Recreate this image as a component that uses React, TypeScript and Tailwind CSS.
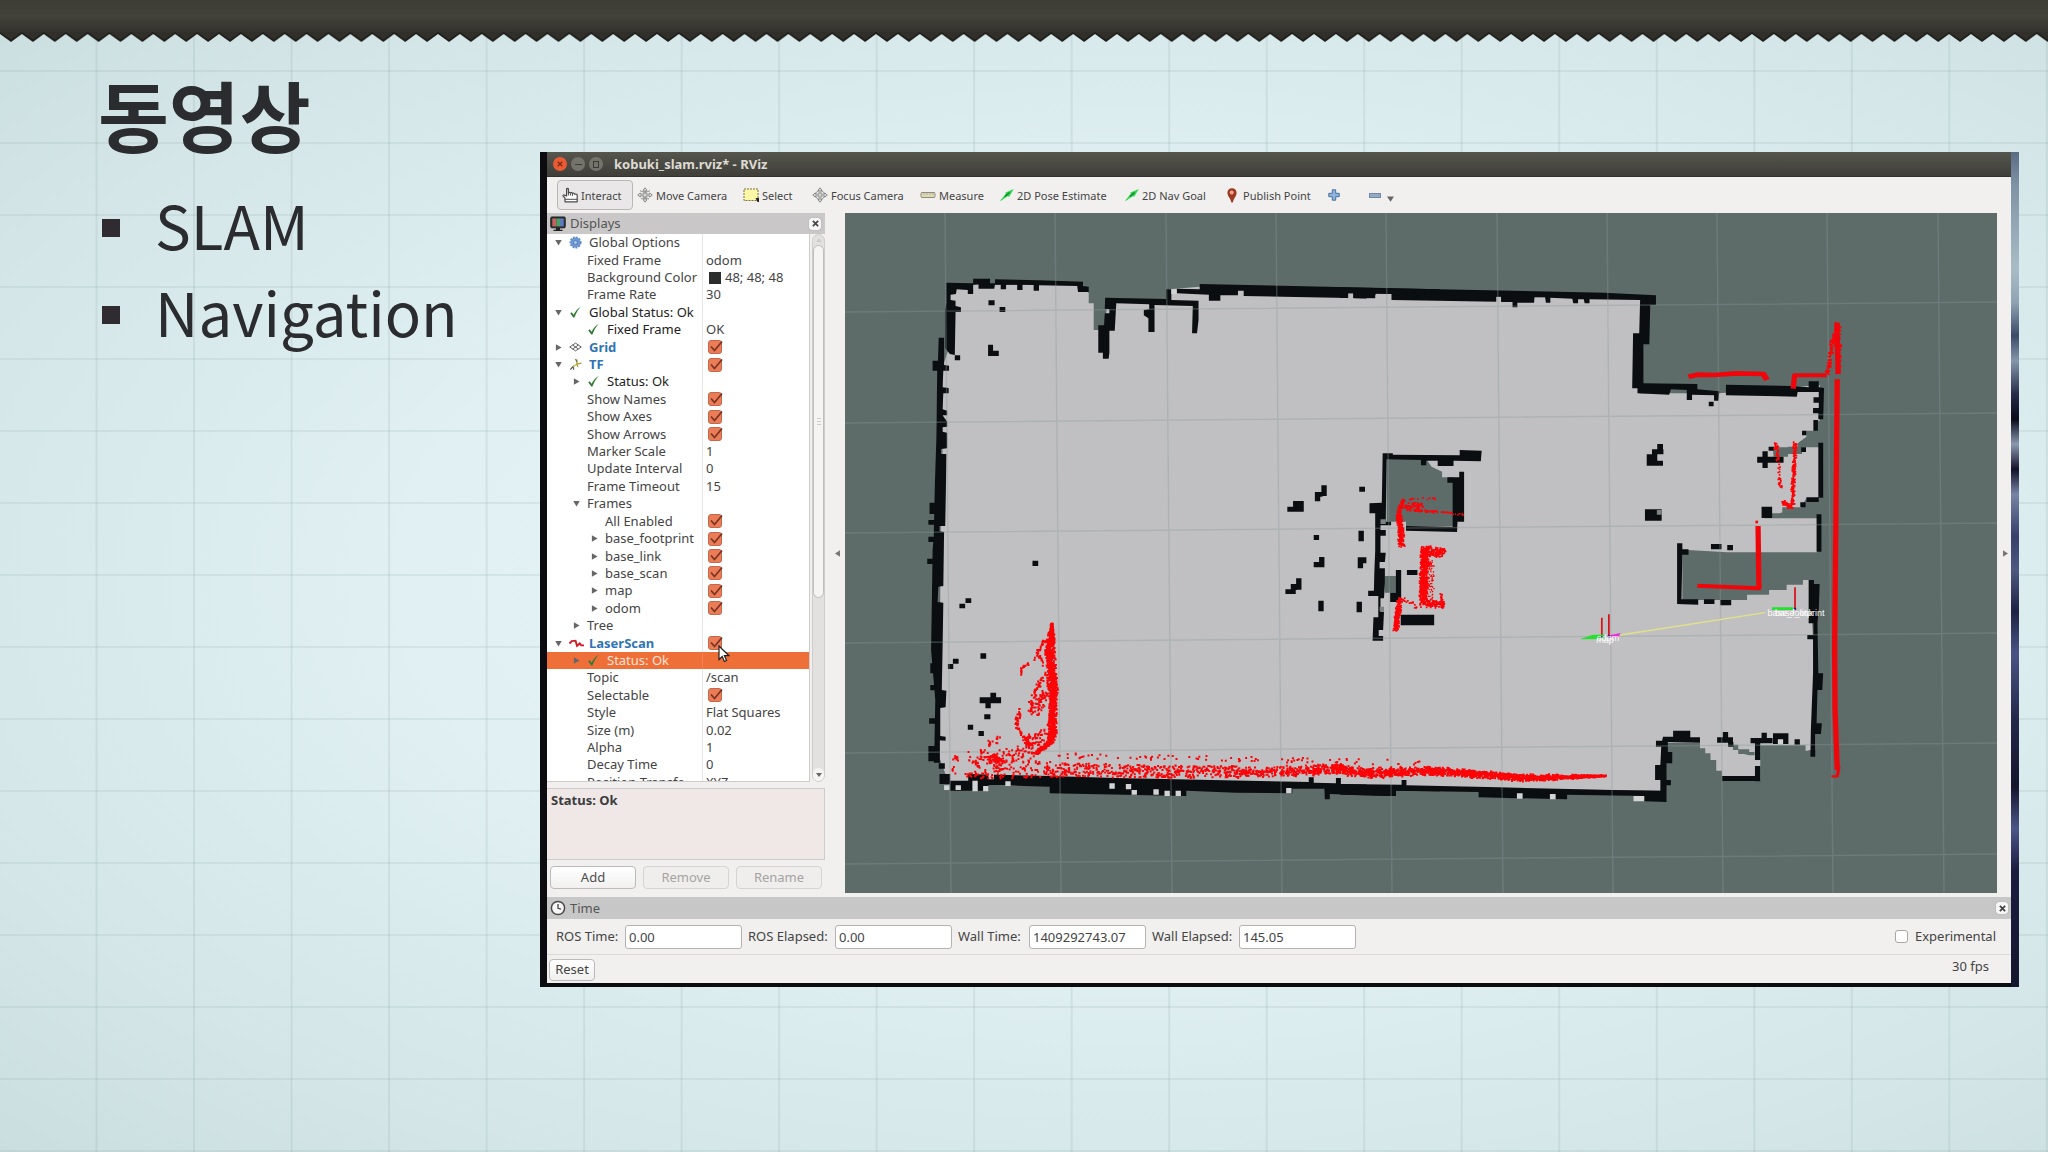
import React from "react";

/* ---------- small icons ---------- */

const HandIcon = () => (
  <svg viewBox="0 0 16 16" className="h-4 w-4 shrink-0" fill="#fff" stroke="#4a4a4a" strokeWidth="1.2" strokeLinejoin="round">
    <path d="M4.6 9V2.2c0-1 1.8-1 1.8 0V6c.2-.9 1.9-.9 2 .1.3-.7 2-.6 2 .4.3-.6 2-.5 2 .6H14c.8 0 1.2.5 1.200 1.200V14.800H3V11L1.200 9.200c-.6-.8.5-1.800 1.300-1.100z" />
    <path d="M3 12.300h12M6.400 6v2.500M8.400 6.500v2M10.400 7v2" strokeWidth="1" />
  </svg>
);

const MoveIcon = ({ ring = false }: { ring?: boolean }) => (
  <svg viewBox="0 0 16 16" className="h-4 w-4 shrink-0" fill="#e4e4e2" stroke="#808080" strokeWidth="0.9" strokeLinejoin="round">
    {ring && <circle cx="8" cy="8" r="4.600" fill="none" />}
    <path d="M8 .8l2 2.500H8.900v3.800h3.800V6L15.300 8l-2.600 2V8.900H8.900v3.800H10L8 15.200l-2-2.500h1.100V8.900H3.300V10L.7 8l2.600-2v1.100h3.800V3.300H6z" />
    {!ring && <path d="M3 3.500c2.500 2 7.500 2 10 0M4 12c2-1.500 6-1.500 8 0" fill="none" />}
  </svg>
);

const SelectIcon = () => (
  <svg viewBox="0 0 16 14" className="h-[14px] w-4 shrink-0">
    <rect x="1" y="1" width="14" height="11.500" fill="#fbf7a6" stroke="#77733c" strokeDasharray="2 1" />
    <path d="M12.500 10h3.500v4h-1.500z" fill="#222" />
  </svg>
);

const RulerIcon = () => (
  <svg viewBox="0 0 16 8" className="h-2 w-4 shrink-0">
    <rect x="1" y="1.500" width="14" height="5" rx="1" fill="#dedbb4" stroke="#8d8c80" />
    <path d="M4 2v2M7 2v2M10 2v2M13 2v2" stroke="#a5a38b" strokeWidth=".7" />
  </svg>
);

const ArrowIcon = () => (
  <svg viewBox="0 0 14 12" className="h-3 w-[14px] shrink-0">
    <path d="M0 11.800L6 4.500l-1-.8L13.800 0 9 8l-1-1L1 11.800z" fill="#2fd64c" />
    <path d="M5 7.500L9.500 3.500" stroke="#12802b" strokeWidth="1.300" />
  </svg>
);

const PinIcon = () => (
  <svg viewBox="0 0 10 15" className="h-[15px] w-[10px] shrink-0">
    <path d="M5 .3c2.800 0 4.600 2 4.600 4.500C9.600 8.200 6.800 10 5.800 14.500H4.400C3.500 10 .4 8.200.4 4.800.4 2.300 2.200.3 5 .3z" fill="#9c3a22" />
    <circle cx="4.700" cy="4.500" r="2" fill="#f0a58d" />
  </svg>
);

const PlusIcon = () => (
  <svg viewBox="0 0 12 12" className="h-3 w-3">
    <path d="M4.300.8h3.400v3.500h3.500v3.400H7.700v3.500H4.300V7.700H.8V4.300h3.500z" fill="#8fb4dc" stroke="#49709f" />
  </svg>
);

const MonitorIcon = () => (
  <svg viewBox="0 0 16 16" className="h-4 w-4 shrink-0">
    <rect x=".8" y="1" width="14.400" height="10.800" rx="1" fill="#333" stroke="#1d1d1d" />
    <rect x="2.300" y="2.500" width="4" height="7.800" fill="#c5635f" />
    <rect x="6.300" y="2.500" width="3.700" height="7.800" fill="#4fa066" />
    <rect x="10" y="2.500" width="3.700" height="7.800" fill="#5f78c4" />
    <path d="M6 12h4v1.800h2.500V15h-9v-1.200H6z" fill="#222" />
  </svg>
);

const ClockIcon = () => (
  <svg viewBox="0 0 16 16" className="h-4 w-4 shrink-0">
    <circle cx="8" cy="8" r="6.600" fill="#f7f7f7" stroke="#4a4a4a" strokeWidth="1.500" />
    <path d="M8 4v4.300l3 .8" fill="none" stroke="#444" strokeWidth="1.300" />
  </svg>
);

const CloseButton = ({ label }: { label: string }) => (
  <button aria-label={label} className="flex h-3 w-3 shrink-0 items-center justify-center rounded-[3px] bg-[#f6f6f6] shadow-[0_0_1px_#777]">
    <svg viewBox="0 0 8 8" className="h-[7px] w-[7px]" stroke="#444" strokeWidth="2">
      <path d="M1 1l6 6M7 1L1 7" />
    </svg>
  </button>
);

const Triangle = ({ open }: { open: boolean }) => (
  <svg viewBox="0 0 8 8" className="h-[7px] w-[7px]" fill="#666">
    {open ? <path d="M.3 1h7.400L4 7.500z" /> : <path d="M1 .3v7.400L7.500 4z" />}
  </svg>
);

/* ---------- display tree ---------- */

type IconKind = "gear" | "check" | "grid" | "tf" | "laser";

const RowIcon = ({ kind }: { kind: IconKind }) => {
  switch (kind) {
    case "gear":
      return (
        <svg viewBox="0 0 14 14" className="h-[13px] w-[13px]">
          <circle cx="7" cy="7" r="5.500" fill="#6f9ad2" stroke="#5f8bc6" strokeWidth="2" strokeDasharray="2 1.200" />
          <circle cx="7" cy="7" r="2.200" fill="#a9c5e8" stroke="#4d7ab5" />
        </svg>
      );
    case "check":
      return (
        <svg viewBox="0 0 14 14" className="h-[13px] w-[13px]">
          <path d="M1.300 8l1.600-1.200 2 2.700C7 5.500 9.500 2.500 12.800.8c-3 3.200-5.200 6.800-7 11.700H4.500C3.800 10.800 2.600 9.200 1.300 8z" fill="#2f7a35" />
        </svg>
      );
    case "grid":
      return (
        <svg viewBox="0 0 14 10" className="h-[10px] w-[13px]" fill="none" stroke="#555" strokeWidth="1">
          <path d="M7 .8L13.200 5 7 9.200.8 5zM3.900 2.900l6.200 4.200M10.100 2.900L3.900 7.100" />
        </svg>
      );
    case "tf":
      return (
        <svg viewBox="0 0 14 14" className="h-[13px] w-[14px]" fill="none" strokeWidth="1.300">
          <path d="M.8 12.500L4 9l.5 3.500" stroke="#555" />
          <path d="M4 9.500l4-3" stroke="#c8c13c" />
          <path d="M8 1.500V6.500l4.800-1M8 6.500l1 3" stroke="#a89a30" />
          <path d="M6.500 1l1.500 3" stroke="#666" />
        </svg>
      );
    default:
      return (
        <svg viewBox="0 0 16 10" className="h-[10px] w-[15px]" fill="none" stroke="#d31b26" strokeWidth="2">
          <path d="M.5 5.500L3 3l4-.5L8.500 8l3-2.500 1.500 2h3" />
        </svg>
      );
  }
};

type Row = {
  name: string;
  depth: 0 | 1 | 2;
  open?: boolean;
  icon?: IconKind;
  value?: string;
  swatch?: boolean;
  box?: boolean;
  tone?: "dark" | "blue";
  selected?: boolean;
};

const rows: Row[] = [
  { name: "Global Options", depth: 0, open: true, icon: "gear" },
  { name: "Fixed Frame", depth: 1, value: "odom" },
  { name: "Background Color", depth: 1, value: "48; 48; 48", swatch: true },
  { name: "Frame Rate", depth: 1, value: "30" },
  { name: "Global Status: Ok", depth: 0, open: true, icon: "check", tone: "dark" },
  { name: "Fixed Frame", depth: 1, icon: "check", value: "OK", tone: "dark" },
  { name: "Grid", depth: 0, open: false, icon: "grid", box: true, tone: "blue" },
  { name: "TF", depth: 0, open: true, icon: "tf", box: true, tone: "blue" },
  { name: "Status: Ok", depth: 1, open: false, icon: "check", tone: "dark" },
  { name: "Show Names", depth: 1, box: true },
  { name: "Show Axes", depth: 1, box: true },
  { name: "Show Arrows", depth: 1, box: true },
  { name: "Marker Scale", depth: 1, value: "1" },
  { name: "Update Interval", depth: 1, value: "0" },
  { name: "Frame Timeout", depth: 1, value: "15" },
  { name: "Frames", depth: 1, open: true },
  { name: "All Enabled", depth: 2, box: true },
  { name: "base_footprint", depth: 2, open: false, box: true },
  { name: "base_link", depth: 2, open: false, box: true },
  { name: "base_scan", depth: 2, open: false, box: true },
  { name: "map", depth: 2, open: false, box: true },
  { name: "odom", depth: 2, open: false, box: true },
  { name: "Tree", depth: 1, open: false },
  { name: "LaserScan", depth: 0, open: true, icon: "laser", box: true, tone: "blue" },
  { name: "Status: Ok", depth: 1, open: false, icon: "check", selected: true },
  { name: "Topic", depth: 1, value: "/scan" },
  { name: "Selectable", depth: 1, box: true },
  { name: "Style", depth: 1, value: "Flat Squares" },
  { name: "Size (m)", depth: 1, value: "0.02" },
  { name: "Alpha", depth: 1, value: "1" },
  { name: "Decay Time", depth: 1, value: "0" },
  { name: "Position Transfo", depth: 1, value: "XYZ" },
];

const indent = ["pl-[8px]", "pl-[26px]", "pl-[44px]"];

function TreeRow({ row }: { row: Row }) {
  const color = row.selected
    ? "text-[#fbe3d6]"
    : row.tone === "dark"
      ? "text-[#222]"
      : row.tone === "blue"
        ? "font-bold text-[#2f74b5]"
        : "text-[#444]";
  return (
    <div role="treeitem" aria-selected={!!row.selected} className={`flex min-h-0 flex-1 items-center ${row.selected ? "bg-[#ee6f37]" : ""}`}>
      <div className={`flex w-[156px] shrink-0 items-center self-stretch overflow-hidden border-r whitespace-nowrap ${row.selected ? "border-[#f08250]" : "border-[#e6e6e6]"} ${indent[row.depth]}`}>
        <span className="flex w-[14px] shrink-0 items-center">{row.open !== undefined && <Triangle open={row.open} />}</span>
        {row.icon && (
          <span className="flex w-5 shrink-0 items-center">
            <RowIcon kind={row.icon} />
          </span>
        )}
        <span className={color}>{row.name}</span>
      </div>
      <div className="flex items-center gap-1 pl-[3px] whitespace-nowrap text-[#444]">
        {row.swatch && <span className="ml-[3px] h-3 w-3 bg-[#2c2c2c]" />}
        {row.value}
        {row.box && (
          <span className="relative ml-[2px] flex h-[14px] w-[15px]">
            <input type="checkbox" defaultChecked aria-label={row.name} className="h-[14px] w-[14px] appearance-none rounded-[3px] border border-[#c4674a] bg-[#ea7c58]" />
            <svg viewBox="0 0 15 14" className="pointer-events-none absolute inset-0" fill="none" stroke="#7a3320" strokeWidth="1.700">
              <path d="M3 6.500l3.500 4L14 1.500" />
            </svg>
          </span>
        )}
      </div>
    </div>
  );
}

function DisplaysPanel() {
  return (
    <section className="flex w-[278px] shrink-0 flex-col">
      <header className="flex h-[21px] items-center bg-[#c9c7c8] pr-1 pl-[3px] text-[#555]">
        <MonitorIcon />
        <h2 className="ml-1 flex-1">Displays</h2>
        <CloseButton label="Close Displays" />
      </header>
      <div className="flex h-[548px]">
        <div className="relative min-w-0 flex-1 overflow-hidden border-r border-b border-[#cfcdcc] bg-white">
          <div role="tree" aria-label="Displays" className="flex h-[557px] flex-col">
            {rows.map((row, i) => (
              <TreeRow key={i} row={row} />
            ))}
          </div>
          <svg viewBox="0 0 12 18" className="absolute top-[411px] left-[171px] h-[18px] w-3">
            <path d="M1 1v13.500l3.200-3 2.200 5 2.200-1-2.200-4.800H11z" fill="#fff" stroke="#222" strokeWidth="1.200" />
          </svg>
        </div>
        <div className="ml-[2px] flex w-[13px] flex-col items-center rounded-full border border-[#cfcccb] bg-[#e3e1e0]">
          <span className="flex h-[10px] items-center">
            <svg viewBox="0 0 6 4" className="h-1 w-[6px]"><path d="M0 4l3-4 3 4z" fill="#ccc" /></svg>
          </span>
          <div className="flex h-[353px] w-[11px] flex-col items-center justify-center gap-[2px] rounded-full border border-[#bfbcbb] bg-[#f5f4f3]">
            <span className="h-px w-1 bg-[#ccc]" />
            <span className="h-px w-1 bg-[#ccc]" />
            <span className="h-px w-1 bg-[#ccc]" />
          </div>
          <span className="mt-auto flex h-[13px] w-[11px] items-center justify-center rounded-full bg-[#f5f4f3]">
            <svg viewBox="0 0 6 4" className="h-1 w-[6px]"><path d="M0 0l3 4 3-4z" fill="#666" /></svg>
          </span>
        </div>
      </div>
      <div className="mt-[6px] h-[72px] border border-l-0 border-[#cfcbca] bg-[#efe8e7] px-1 pt-[3px] font-bold text-[#3c3c3c]">Status: Ok</div>
      <div className="mt-[6px] flex gap-[7px] px-[3px]">
        <button className="h-[23px] flex-1 rounded border border-[#bbb] bg-gradient-to-b from-white to-[#f1f0ef] text-[#4c4c4c]">Add</button>
        <button disabled className="h-[23px] flex-1 rounded border border-[#d6d3d2] bg-[#f0eeed] text-[#a5a3a2]">Remove</button>
        <button disabled className="h-[23px] flex-1 rounded border border-[#d6d3d2] bg-[#f0eeed] text-[#a5a3a2]">Rename</button>
      </div>
    </section>
  );
}

/* ---------- occupancy map ---------- */

type R = [number, number, number, number];
const boxes = (list: R[]) => list.map(([x, y, w, h]) => `M${x} ${y}h${w}v${h}h${-w}z`).join("");

const WALL = "#0b0e10";
const FREE = "#c0c0c2";
const UNKNOWN = "#5d6b69";
const LASER = "#fa0408";

const westSpots: R[] = [
  [388, 151, 16, 15], [417, 171, 15, 15], [387, 284, 13, 34], [400, 302, 15, 16], [300, 316, 14, 15],
  [503, 932, 15, 16], [328, 1045, 15, 14], [312, 1061, 15, 14], [1258, 706, 14, 32], [1241, 738, 14, 16],
  [1241, 726, 20, 14], [1184, 753, 28, 32], [1169, 770, 16, 15], [1357, 710, 15, 15], [1238, 855, 14, 15],
  [1355, 842, 14, 32], [1238, 936, 28, 16], [1252, 921, 14, 18], [1353, 922, 27, 18], [1353, 940, 14, 15],
  [1192, 985, 14, 34], [1178, 1002, 16, 18], [1164, 1018, 27, 14], [1250, 1052, 14, 32], [1350, 1055, 14, 32],
  [367, 1210, 15, 16], [295, 1226, 15, 15], [282, 1242, 14, 15], [365, 1342, 56, 18], [393, 1328, 15, 16],
  [380, 1360, 14, 15], [377, 1393, 16, 15], [334, 1424, 14, 15], [362, 1443, 14, 15],
  [234, 758, 14, 34], [231, 810, 18, 14], [231, 860, 16, 16], [228, 926, 18, 16], [236, 1240, 14, 30],
  [236, 1305, 16, 16], [233, 1405, 16, 16], [231, 1488, 28, 46], [245, 1488, 16, 50], [258, 1540, 16, 16],
  [260, 1572, 28, 30], [247, 1470, 14, 20],
];

const westHoles: R[] = [
  [272, 1606, 14, 14], [302, 1606, 14, 14], [346, 1592, 14, 32], [374, 1608, 14, 16], [432, 1594, 14, 14],
  [704, 1600, 14, 16], [747, 1602, 14, 16], [762, 1620, 14, 14], [819, 1618, 14, 16], [848, 1622, 14, 16],
  [877, 1622, 14, 16], [1166, 1614, 14, 16], [388, 1572, 14, 16], [866, 118, 14, 14],
];

const eastSpots: R[] = [
  [838, 455, 11, 14], [1076, 510, 10, 32], [1050, 542, 10, 14], [1087, 578, 11, 165], [1060, 742, 28, 14],
  [1046, 757, 12, 15], [1048, 592, 11, 14], [1083, 793, 11, 112], [960, 604, 12, 50], [948, 620, 60, 18],
  [974, 590, 12, 12], [958, 770, 24, 34], [721, 582, 13, 30], [709, 598, 26, 15], [697, 613, 24, 34],
  [721, 632, 13, 15], [693, 778, 38, 34], [827, 1048, 24, 14], [864, 1050, 25, 16], [843, 882, 24, 16],
  [880, 885, 13, 16], [127, 960, 12, 96], [114, 1028, 14, 28], [152, 960, 24, 15], [138, 1094, 76, 32],
  [870, 1446, 12, 16], [857, 1462, 36, 16], [882, 1476, 12, 14], [933, 1464, 50, 16], [958, 1448, 12, 16],
  [984, 1450, 35, 32], [1033, 1468, 12, 16], [943, 1480, 12, 50], [943, 1548, 12, 46], [868, 1578, 80, 15],
];

const eastHoles: R[] = [[402, 1630, 13, 16], [477, 1632, 13, 16], [667, 1638, 24, 16], [995, 1468, 12, 14]];

/* Deterministic noise so the scan looks the same on each render. */
function makeRandom(seed: number) {
  let s = seed;
  return () => {
    s = (s * 1664525 + 1013904223) % 4294967296;
    return s / 4294967296;
  };
}

function interpolate(points: [number, number][], t: number) {
  for (let i = 1; i < points.length; i++) {
    const [x0, y0] = points[i - 1];
    const [x1, y1] = points[i];
    if (t <= x1) return y0 + ((y1 - y0) * (t - x0)) / (x1 - x0);
  }
  return points[points.length - 1][1];
}

function scanDots() {
  const rnd = makeRandom(7);
  const bell = () => rnd() + rnd() - 1;
  const out: string[] = [];
  const dot = (x: number, y: number, s = 2) => out.push(`M${x.toFixed(1)} ${y.toFixed(1)}h${s}v${s}h-${s}z`);

  const mid: [number, number][] = [[975, 766], [1060, 769], [1200, 771], [1260, 771], [1335, 768], [1370, 772], [1430, 770], [1472, 773], [1525, 777], [1605, 775]];
  const spread: [number, number][] = [[975, 12], [1010, 10], [1060, 7], [1200, 6], [1300, 6], [1370, 6], [1420, 5], [1530, 4], [1605, 1]];
  for (let i = 0; i < 3700; i++) {
    const x = 975 + 630 * rnd();
    const keep = x < 1040 ? 0.28 : x < 1220 ? 0.4 : x < 1330 ? 0.55 : 1;
    if (rnd() > keep) continue;
    const offset = x < 1240 ? rnd() * 2 - 1 : bell();
    dot(x, interpolate(mid, x) + offset * interpolate(spread, x));
  }
  for (let i = 0; i < 80; i++) {
    const x = 1055 + 380 * rnd();
    dot(x, 752 + (x - 1055) * 0.02 + rnd() * 5);
  }
  const centre: [number, number][] = [[622, 1051], [650, 1049], [690, 1052], [720, 1051], [740, 1051], [753, 1034]];
  const width: [number, number][] = [[622, 1], [640, 5], [660, 6], [700, 5], [735, 5], [753, 4]];
  for (let i = 0; i < 1100; i++) {
    const y = 622 + 131 * rnd();
    dot(interpolate(centre, y) + bell() * interpolate(width, y), y);
  }
  /* thin arcs that trail off to the left of the dense column */
  const arc = (x0: number, y0: number, x1: number, y1: number, jitter: number, n: number) => {
    for (let i = 0; i < n; i++) {
      const t = rnd();
      dot(x0 + (x1 - x0) * t + bell() * jitter, y0 + (y1 - y0) * t + bell() * jitter);
    }
  };
  arc(1046, 636, 1036, 652, 2, 14);
  arc(1036, 652, 1043, 664, 2, 16);
  arc(1034, 658, 1020, 668, 2, 12);
  arc(1020, 668, 1020, 674, 1, 5);
  arc(1044, 672, 1034, 690, 3, 26);
  arc(1034, 690, 1030, 712, 4, 34);
  arc(1042, 690, 1038, 712, 6, 50);
  arc(1018, 706, 1016, 726, 3, 26);
  arc(1016, 726, 1026, 742, 3, 26);
  arc(1026, 738, 1046, 730, 5, 26);
  arc(1024, 744, 1042, 740, 5, 34);
  arc(1000, 736, 982, 748, 5, 16);
  arc(982, 748, 974, 766, 5, 20);
  arc(988, 754, 1002, 764, 8, 70);
  arc(1004, 752, 1034, 752, 8, 44);
  arc(955, 756, 953, 770, 3, 14);
  arc(966, 748, 970, 760, 3, 5);
  arc(966, 774, 985, 774, 4, 16);
  return out.join("");
}

function clusterDots() {
  const rnd = makeRandom(31);
  const out: string[] = [];
  const along = (x0: number, y0: number, x1: number, y1: number, jx: number, jy: number, n: number, s = 4) => {
    for (let i = 0; i < n; i++) {
      const t = rnd();
      const x = x0 + (x1 - x0) * t + (rnd() + rnd() - 1) * jx;
      const y = y0 + (y1 - y0) * t + (rnd() + rnd() - 1) * jy;
      out.push(`M${x.toFixed(0)} ${y.toFixed(0)}h${s}v${s + 1}h-${s}z`);
    }
  };
  along(150, 745, 216, 745, 3, 8, 14);
  along(145, 765, 185, 765, 5, 10, 60);
  along(150, 778, 240, 785, 3, 4, 60);
  along(240, 785, 282, 793, 2, 4, 20, 3);
  along(142, 745, 132, 790, 6, 8, 60);
  along(132, 790, 138, 885, 8, 6, 220);
  along(185, 900, 236, 905, 8, 18, 160);
  along(190, 895, 188, 1060, 11, 8, 560);
  along(205, 925, 206, 1050, 8, 4, 60, 3);
  along(195, 1058, 234, 1062, 8, 14, 80);
  along(228, 1030, 232, 1070, 4, 4, 30);
  along(134, 1045, 124, 1140, 7, 6, 200);
  along(140, 1045, 178, 1070, 8, 10, 18);
  along(1032, 575, 1026, 765, 5, 4, 190);
  along(1005, 755, 1024, 768, 6, 8, 70);
  along(988, 580, 990, 606, 6, 6, 24);
  along(992, 610, 999, 712, 4, 4, 36);
  along(1106, 368, 1116, 280, 6, 6, 70);
  along(1116, 280, 1130, 230, 7, 6, 70);
  along(1130, 218, 1132, 370, 7, 5, 130);
  return out.join("");
}

const scanPath = scanDots();
const clusterPath = clusterDots();

function MapView() {
  const verticals = Array.from({ length: 10 }, (_, i) => `M${945 + 110 * i + Math.round(i * 0.3)} 213l6 680`).join("");
  const horizontals = [312, 423, 533, 643, 753, 864].map((y) => `M845 ${y}l1152 -10`).join("");
  return (
    <svg role="img" aria-label="Occupancy map with laser scan" viewBox="845 213 1152 680" preserveAspectRatio="xMidYMid slice" className="block h-full w-full bg-[#5d6b69]">
      {/* western half */}
      <g transform="translate(840 250) scale(.38265 .33333)">
        <path fill={FREE} d="M285 105L635 105L650 130V160H663V240H690L700 150H860V118L940 110L1480 125V1615L290 1605L275 1570L262 1530L247 1475L255 1440L262 1200L262 900L268 600L268 350L285 295z" />
        <path fill={WALL} d="M278 98L348 100V86H392V100H405V88L520 91L635 95V108L650 110V126H622L620 108L520 106V122H506V105L477 104V120H463V104H434V118H420V104H405L403 116H362V102L348 104V132H334V120L305 118L303 132L289 134V150L302 152V168L316 172V186H302L300 315L287 312L275 295V180L278 160z" />
        <path fill={WALL} d="M258 263H272V345L285 347V362H270L268 412L284 414V430H270L268 478L280 482V496H268L280 515V530L268 532V545L280 548V595L264 597V612H278L277 700L275 828H260V844L272 846L270 1008L257 1010L255 1056L270 1058L268 1200L266 1320L278 1322L276 1372L262 1374V1458L276 1460V1472L247 1470L249 1350L238 1200L240 1060L242 900L245 860L248 700L252 560L254 362H242V332H256z" />
        <path fill={WALL} d="M693 143L852 147V118H866V150L937 152V210L933 250H920L922 168L822 165V246H806V205L794 196V180L808 178V163L722 160L718 242H704V308L702 326H687V308H675V226H690L692 190H704V178L692 176z" />
        <path fill={WALL} d="M880 116L940 118V102L1568 118V152L1443 148V132L1400 130L1398 146L1342 145V130H1328V144L1055 138V122H1040V136H994V152H964V134L880 130z" />
        <path fill={WALL} d="M335 1572L548 1578L720 1584L1225 1596V1582H1238V1598L1296 1600V1584H1309V1602L1468 1606V1590H1481V1606L1568 1608V1624L1453 1622V1638H1430L1280 1632V1648H1267L1266 1616H1182V1630L1035 1628L905 1622V1638L548 1630V1610L434 1606H388V1622H288V1592H335z" />
        <path fill={WALL} d={boxes(westSpots)} />
        <path fill="#d2d3d4" d={boxes(westHoles)} />
      </g>

      {/* eastern half */}
      <g transform="translate(1340 250) scale(.44005 .33333)">
        <path fill={FREE} d="M60 135L690 145V400L680 430L862 430L1090 405V512H1076V542H1060V560L1040 580V590H1018V600H985V612H1050V592H1090V745H1060L1046 775L965 800V805H1085V907H880L790 900L778 914V1050H925V1045V1034H975V1020H1015V1004H1052V990H1068L1080 1290V1500H1065V1502H1058V1486H955V1590H868V1562H855V1530H842V1510H830V1495H818V1478H735V1622L60 1612z" />
        <path fill={UNKNOWN} d="M106 625H195L208 650L232 665V682H258V828H150V815H106zM102 978H128V1028H102zM893 1484H905V1498H930V1506H942V1516H930L918 1512H905V1500H893zM985 592H1048V605H1018V620H985zM1005 772H1046V790H1005zM972 790H995V804H972z" />
        <path fill={WALL} d="M0 112L80 114L600 128L718 136V165H705L703 283H690V400L812 402V418L862 424L860 452H850V436L800 434V450H788V420L752 418L748 434L676 430V415H664L666 250H680L682 150L567 148V160H556L554 148H541V160H530L528 146L478 143V158H468L466 142H442L441 158H403V172H392V156H366V140H355V155L117 150V132L80 131V145L30 144V130H17V144H0z" />
        <path fill={WALL} d="M877 404L1025 408L1065 412V394H1088V412L1100 414L1098 508H1087V490H1075V474H1088V458H1076V442H1088V426H1040L1038 440L877 436z" />
        <path fill={WALL} d="M766 880H778V898H792V914H778L776 1048H814V1064L766 1062z" />
        <path fill={WALL} d="M1065 990H1077V1002H1090L1088 1080L1085 1120L1087 1270H1098L1096 1320H1085L1083 1420H1095L1093 1452H1080V1520H1069L1070 1440L1075 1270V1168H1062V1155H1076V1120H1065z" />
        <path fill={WALL} d="M757 1442H796V1462H818V1478L745 1476V1506H755V1540H742V1590H752V1606H742V1656L692 1654V1638L516 1634V1648L315 1642V1626L125 1622V1638L0 1634V1602L140 1604V1590H151V1606L360 1612L620 1620L728 1622V1590H716V1545H728L730 1490H718V1472H732L734 1460H757z" />
        <path fill={WALL} d="M97 610H120V614L272 616V600L322 602L320 634L258 632V648H222V632H196V646H184V630L106 628L104 815H116V826H92V840H104V857H92V908H104L102 936H90V955H102V1000L100 1045H92V1085H100L98 1140H88V1158H98V1172H74L76 1102H87V1038H64V1022H77L78 970L80 900V790H67V760L95 758z" />
        <path fill={WALL} d="M271 665H282V815H267L266 846L150 842V828L256 830V698H244V682H271z" />
        <path fill={WALL} d={boxes(eastSpots)} />
        <path fill="#7b8483" d="M720 780h11v14h-11zM92 808h12v14h-12zM90 1070h10v14h-10z" />
        <path fill="#d2d3d4" d={boxes(eastHoles)} />
      </g>

      <path d={verticals + horizontals} fill="none" stroke="#8b9a97" strokeOpacity=".34" strokeWidth="1.500" />

      {/* laser returns */}
      <path d={scanPath} fill={LASER} />
      <g transform="translate(1340 250) scale(.44005 .33333)">
        <path d={clusterPath} fill={LASER} />
        <g fill="none" stroke="#f0060a" strokeWidth="11" strokeLinejoin="round">
          <path d="M792 380L812 374L850 375L900 370L962 372L970 390" strokeWidth="14" />
          <path d="M1030 416L1033 376H1106" strokeWidth="12" />
          <path d="M1129 218L1132 372" strokeWidth="12" />
          <path d="M1130 388L1127 800L1124 1200L1125 1380L1130 1560" strokeWidth="12" />
          <path d="M1117 1579H1130L1134 1550" strokeWidth="7" />
          <path d="M950 828L952 1015L812 1007" strokeWidth="12" />
        </g>
        <path d="M944 812h6v8h-6z" fill={LASER} />

        {/* transform frames */}
        <path d="M637 1155L966 1088" stroke="#e2e08a" strokeWidth="4" />
        <path d="M595 1103V1165M611 1093V1160M1034 1012V1078" stroke="#d6141c" strokeWidth="4" />
        <path d="M545 1168L575 1154H600V1167zM982 1072H1030V1080H982z" fill="#25e02c" />
        <path d="M612 1156L638 1149L632 1162H612z" fill="#e22fd6" />
        <path d="M595 1158V1166M611 1156V1162M1034 1073V1080" stroke="#1c1e8c" strokeWidth="5" />
      </g>
      <g fontFamily="Liberation Sans" fontSize="9" fill="#fbfbfb" textAnchor="middle">
        <text x="1605" y="643">map</text>
        <text x="1608" y="641">odom</text>
        <text x="1796" y="616">base_footprint</text>
        <text x="1794" y="616">base_link</text>
      </g>
    </svg>
  );
}

/* ---------- window ---------- */

const ToolButton = ({ icon, label, className }: { icon: React.ReactNode; label: string; className: string }) => (
  <button className={`flex shrink-0 items-center gap-[3px] whitespace-nowrap ${className}`}>
    {icon}
    {label}
  </button>
);

function Toolbar() {
  return (
    <div role="toolbar" className="flex h-9 items-center bg-[#f1f0ef] pl-[10px] text-[11px] text-[#444]">
      <ToolButton icon={<HandIcon />} label="Interact" className="h-[30px] w-[76px] rounded border border-[#b9b6b5] bg-[#eae7e8] pl-1" />
      <ToolButton icon={<MoveIcon />} label="Move Camera" className="w-[110px] pl-1" />
      <ToolButton icon={<SelectIcon />} label="Select" className="w-[69px]" />
      <ToolButton icon={<MoveIcon ring />} label="Focus Camera" className="w-[108px]" />
      <ToolButton icon={<RulerIcon />} label="Measure" className="w-[80px]" />
      <ToolButton icon={<ArrowIcon />} label="2D Pose Estimate" className="w-[125px]" />
      <ToolButton icon={<ArrowIcon />} label="2D Nav Goal" className="w-[102px]" />
      <button className="flex w-[101px] shrink-0 items-center gap-[6px] whitespace-nowrap">
        <PinIcon />
        Publish Point
      </button>
      <button aria-label="Add tool" className="w-[41px]"><PlusIcon /></button>
      <button aria-label="Remove tool" className="flex items-end gap-[6px] pt-1">
        <span className="mb-[4px] h-[5px] w-3 border border-[#7289a8] bg-[#96a9c4]" />
        <svg viewBox="0 0 8 6" className="h-[6px] w-[7px]"><path d="M0 0h8L4 6z" fill="#666" /></svg>
      </button>
    </div>
  );
}

function Field({ id, label, value, className }: { id: string; label: string; value: string; className: string }) {
  return (
    <div className="flex items-center">
      <label htmlFor={id} className={`whitespace-nowrap ${className}`}>{label}</label>
      <input id={id} readOnly defaultValue={value} className="h-6 w-[117px] rounded-[3px] border border-[#b5b2b1] bg-white px-[3px] text-[#444]" />
    </div>
  );
}

function RvizWindow() {
  return (
    <div className="mt-[110px] mr-[29px] min-w-0 flex-1 self-start bg-[linear-gradient(180deg,#5a6c84_0%,#7f93a6_4%,#a9bcc6_14%,#8fa3b4_18%,#3c4a68_22%,#8496ac_25%,#262c48_29%,#0a0a1a_32%,#8a98b0_35%,#12122a_38%,#7884a4_41%,#36406a_46%,#4d5a80_50%,#1e2244_55%,#4a5484_60%,#23284a_68%,#14142c_76%,#4c5688_81%,#1b1d40_86%,#14162e_100%)]">
      <div className="mr-2 border-b-4 border-l-[7px] border-[#0b0b10] bg-[#f1f0ef] font-['Noto_Sans',sans-serif] text-[13px] leading-[17px]">
        <header className="flex h-[25px] items-center gap-[4px] border-b border-[#33322e] bg-gradient-to-b from-[#55564e] to-[#3f3e39] pl-[6px]">
          <button aria-label="Close" className="flex h-[14px] w-[14px] items-center justify-center rounded-full bg-[#ea5b34]">
            <svg viewBox="0 0 8 8" className="h-[6px] w-[6px]" stroke="#7b2410" strokeWidth="1.500"><path d="M1 1l6 6M7 1L1 7" /></svg>
          </button>
          <button aria-label="Minimize" className="flex h-[14px] w-[14px] items-center justify-center rounded-full bg-[#74736c]">
            <span className="h-px w-[7px] bg-[#3a3935]" />
          </button>
          <button aria-label="Maximize" className="flex h-[14px] w-[14px] items-center justify-center rounded-full bg-[#74736c]">
            <span className="h-[7px] w-[6px] border border-[#3a3935]" />
          </button>
          <h1 className="ml-[7px] font-bold text-[#dedbd3]">kobuki_slam.rviz* - RViz</h1>
        </header>
        <Toolbar />
        <div className="flex">
          <DisplaysPanel />
          <button aria-label="Collapse left panel" className="flex w-5 shrink-0 items-center justify-center pl-1">
            <svg viewBox="0 0 6 8" className="h-[7px] w-[5px]"><path d="M6 0v8L0 4z" fill="#777" /></svg>
          </button>
          <div className="h-[680px] min-w-0 flex-1">
            <MapView />
          </div>
          <button aria-label="Collapse right panel" className="flex w-[14px] shrink-0 items-center justify-center pl-[2px]">
            <svg viewBox="0 0 6 8" className="h-[7px] w-[5px]"><path d="M0 0v8l6-4z" fill="#777" /></svg>
          </button>
        </div>
        <section className="mt-1">
          <header className="flex h-[22px] items-center bg-[#c8c7c7] px-[3px] text-[#555]">
            <ClockIcon />
            <h2 className="ml-1 flex-1">Time</h2>
            <CloseButton label="Close Time" />
          </header>
          <div className="flex h-9 items-center border-b border-[#dddad9] pl-[9px] text-[#444]">
            <Field id="ros-time" label="ROS Time:" value="0.00" className="w-[69px]" />
            <Field id="ros-elapsed" label="ROS Elapsed:" value="0.00" className="w-[93px] pl-[6px]" />
            <Field id="wall-time" label="Wall Time:" value="1409292743.07" className="w-[77px] pl-[6px]" />
            <Field id="wall-elapsed" label="Wall Elapsed:" value="145.05" className="w-[93px] pl-[6px]" />
            <div className="ml-auto flex items-center gap-[7px] pr-[15px]">
              <input id="experimental" type="checkbox" className="h-[13px] w-[13px] appearance-none rounded-[3px] border border-[#a9a6a5] bg-white" />
              <label htmlFor="experimental">Experimental</label>
            </div>
          </div>
          <footer className="flex h-[28px] items-center justify-between pr-[22px] pl-[2px] text-[#444]">
            <button className="mt-px h-[22px] w-[46px] rounded border border-[#bbb] bg-gradient-to-b from-white to-[#f1f0ef]">Reset</button>
            <span className="mb-[6px]">30 fps</span>
          </footer>
        </section>
      </div>
    </div>
  );
}

/* ---------- slide ---------- */

function TornEdge() {
  return (
    <svg className="block h-[10px] w-full" aria-hidden="true">
      <defs>
        <pattern id="zigzag" width="21.900" height="10" patternUnits="userSpaceOnUse">
          <path d="M0 0H21.900V2L11 10L0 2z" fill="#1f1e1a" />
          <path d="M0 0H21.900L11 7.500z" fill="#302f2a" />
        </pattern>
      </defs>
      <rect width="100%" height="10" fill="url(#zigzag)" />
    </svg>
  );
}

export default function App() {
  return (
    <div className="min-h-screen bg-[radial-gradient(ellipse_at_55%_50%,#e4f5f7_0%,#e0f0f3_45%,#d4e6e8_78%,#cbdedf_100%)]">
      <div className="min-h-screen bg-[linear-gradient(90deg,transparent_calc(100%-2px),rgba(120,145,145,0.15)_0),linear-gradient(180deg,transparent_calc(100%-2px),rgba(120,145,145,0.13)_0)] bg-[size:calc(100%/21)_72px]">
        <div className="h-8 bg-gradient-to-b from-[#3d3c35] via-[#42423a] to-[#34332e]" />
        <TornEdge />
        <main className="flex font-['Noto_Sans_CJK_KR',sans-serif] text-[#2b2c2f]">
          <section className="w-[540px] shrink-0 pl-[98px]">
            <h1 className="mt-4 text-[77px] leading-[112px] font-bold">동영상</h1>
            <ul className="mt-[10px] text-[60px] leading-[87px]">
              {["SLAM", "Navigation"].map((item) => (
                <li key={item} className="flex items-center">
                  <span className="mt-2 mr-[35px] ml-1 h-[18px] w-[18px] bg-[#2f2b30]" />
                  {item}
                </li>
              ))}
            </ul>
          </section>
          <RvizWindow />
        </main>
      </div>
    </div>
  );
}
